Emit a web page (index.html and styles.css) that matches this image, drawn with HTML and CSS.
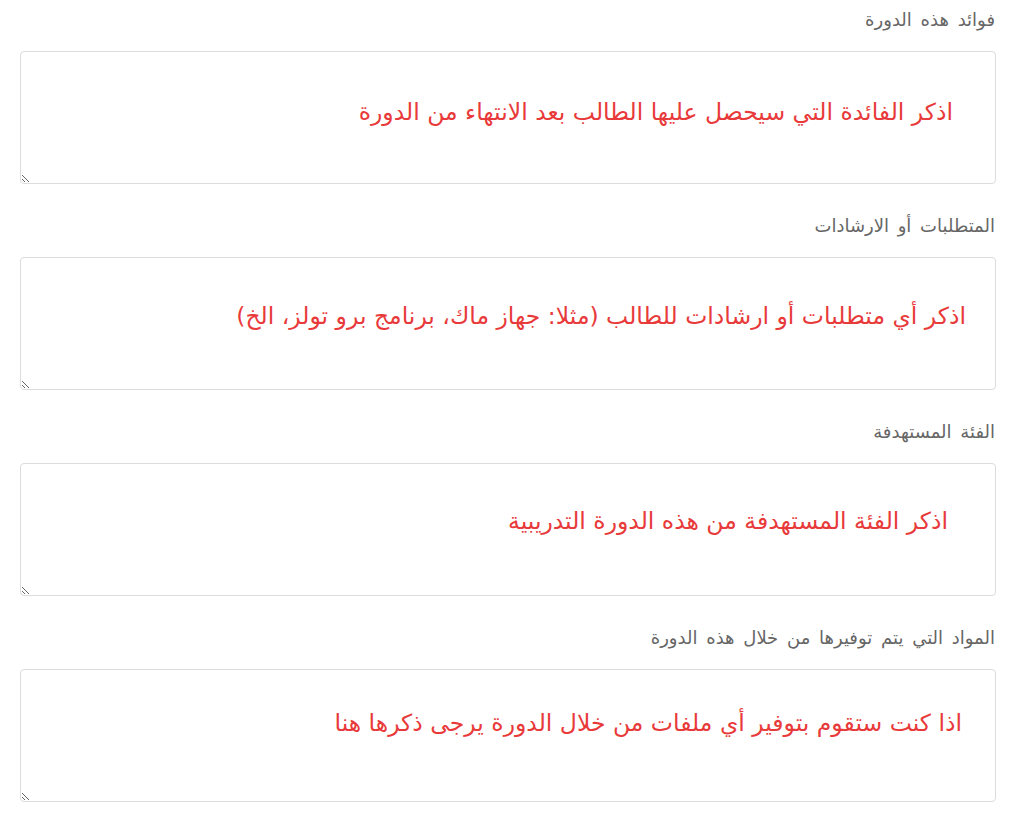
FILE: index.html
```html
<!DOCTYPE html>
<html lang="ar" dir="rtl">
<head>
<meta charset="utf-8">
<title>تفاصيل الدورة</title>
<link rel="stylesheet" href="styles.css">
</head>
<body>
<main class="form">
  <div class="field">
    <label class="label" for="f1">فوائد هذه الدورة</label>
    <div class="box">
      <textarea id="f1" class="input"></textarea>
      <span class="note note-1">اذكر الفائدة التي سيحصل عليها الطالب بعد الانتهاء من الدورة</span>
    </div>
  </div>
  <div class="field">
    <label class="label" for="f2">المتطلبات أو الارشادات</label>
    <div class="box">
      <textarea id="f2" class="input"></textarea>
      <span class="note note-2">اذكر أي متطلبات أو ارشادات للطالب (مثلا: جهاز ماك، برنامج برو تولز، الخ)</span>
    </div>
  </div>
  <div class="field">
    <label class="label" for="f3">الفئة المستهدفة</label>
    <div class="box">
      <textarea id="f3" class="input"></textarea>
      <span class="note note-3">اذكر الفئة المستهدفة من هذه الدورة التدريبية</span>
    </div>
  </div>
  <div class="field">
    <label class="label" for="f4">المواد التي يتم توفيرها من خلال هذه الدورة</label>
    <div class="box">
      <textarea id="f4" class="input"></textarea>
      <span class="note note-4">اذا كنت ستقوم بتوفير أي ملفات من خلال الدورة يرجى ذكرها هنا</span>
    </div>
  </div>
</main>
</body>
</html>
```
FILE: styles.css
```css
html, body {
  margin: 0;
  padding: 0;
  background: #ffffff;
}
body {
  font-family: "DejaVu Sans", "Noto Sans", sans-serif;
}
.form {
  display: flex;
  flex-direction: column;
  gap: 32px;
  padding: 10px 28px 0 20px;
}
.field {
  display: flex;
  flex-direction: column;
  gap: 21px;
}
.label {
  display: block;
  height: 20px;
  line-height: 20px;
  font-size: 18px;
  word-spacing: 3px;
  color: #666666;
  padding-right: 1px;
}
.box {
  position: relative;
  height: 133px;
}
.input {
  display: block;
  box-sizing: border-box;
  width: 100%;
  height: 133px;
  margin: 0;
  border: 1px solid #dcdcdc;
  border-radius: 4px;
  background: #fff;
  resize: vertical;
  outline: none;
}
.note {
  position: absolute;
  font-size: 23.5px;
  line-height: 30px;
  color: #e83a3a;
  white-space: nowrap;
  pointer-events: none;
}
.note-1 { top: 46px; right: 43px; }
.note-2 { top: 44px; right: 30px; }
.note-3 { top: 43px; right: 48px; }
.note-4 { top: 39px; right: 34px; }
```
